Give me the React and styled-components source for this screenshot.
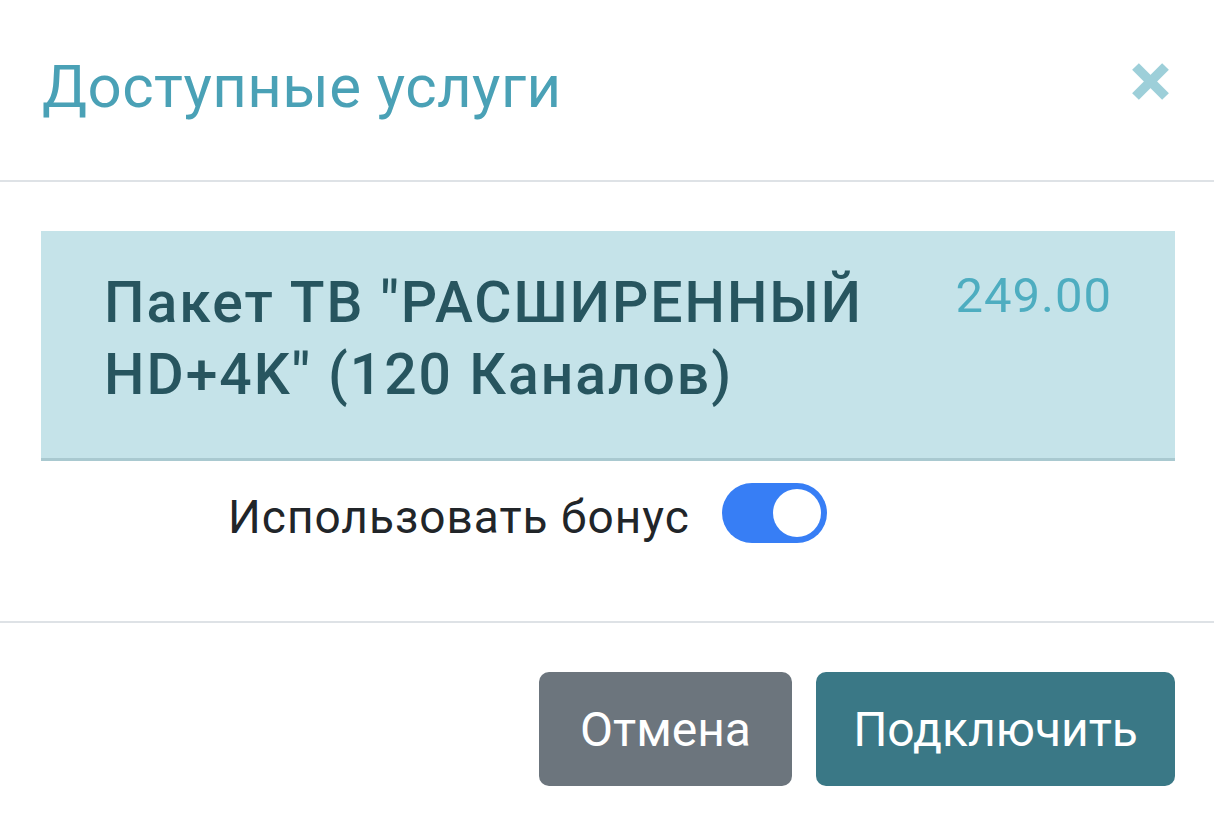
import React from "react";
import styled, { createGlobalStyle } from "styled-components";

const Global = createGlobalStyle`
  html, body { margin: 0; padding: 0; background: #ffffff; }
  body { font-family: Roboto, "Noto Sans", "Liberation Sans", sans-serif; }
  * { box-sizing: border-box; }
`;

const Modal = styled.div`
  width: 1214px;
  min-height: 831px;
  background: #ffffff;
  display: flex;
  flex-direction: column;
`;

const Header = styled.div`
  height: 182px;
  display: flex;
  justify-content: space-between;
  align-items: flex-start;
  padding: 51px 45px 0 42px;
  border-bottom: 2px solid #dee2e6;
`;

const Title = styled.h4`
  margin: 0;
  font-size: 60px;
  line-height: 72px;
  font-weight: 400;
  letter-spacing: 0.4px;
  color: #4aa1b6;
`;

const CloseButton = styled.button`
  margin-top: 12px;
  width: 37px;
  height: 37px;
  padding: 0;
  border: none;
  background: transparent;
  display: flex;
  cursor: pointer;
`;

const Body = styled.div`
  padding: 49px 39px 78px 41px;
`;

const ServiceCard = styled.div`
  height: 230px;
  background: #c5e3e9;
  border-bottom: 3px solid #a9c9d0;
  padding: 36px 63px 0 63px;
  display: flex;
  justify-content: space-between;
  align-items: flex-start;
  gap: 40px;
`;

const ServiceName = styled.div`
  max-width: 810px;
  font-size: 57px;
  line-height: 72px;
  font-weight: 500;
  letter-spacing: 2px;
  color: #27555f;
`;

const Price = styled.div`
  margin-top: 5px;
  font-size: 49px;
  line-height: 48px;
  letter-spacing: 1px;
  color: #4eadc0;
  white-space: nowrap;
`;

const BonusRow = styled.label`
  margin-top: 22px;
  height: 60px;
  padding-left: 187px;
  display: flex;
  align-items: flex-start;
  gap: 32px;
  cursor: pointer;
`;

const BonusText = styled.span`
  margin-top: 9px;
  font-size: 46px;
  line-height: 51px;
  letter-spacing: 1px;
  color: #212529;
`;

const Switch = styled.span`
  position: relative;
  width: 105px;
  height: 60px;
  border-radius: 30px;
  background: ${(p) => (p.$on ? "#377ef5" : "#dee2e6")};
  flex-shrink: 0;
`;

const Knob = styled.span`
  position: absolute;
  top: 6px;
  ${(p) => (p.$on ? "right: 6px;" : "left: 6px;")}
  width: 48px;
  height: 48px;
  border-radius: 50%;
  background: #ffffff;
`;

const Footer = styled.div`
  border-top: 2px solid #dee2e6;
  padding: 49px 39px 0 39px;
  display: flex;
  justify-content: flex-end;
  gap: 24px;
`;

const Button = styled.button`
  width: ${(p) => p.$width}px;
  height: 114px;
  padding: 2px 0 0;
  border: none;
  border-radius: 10px;
  font-family: Roboto, "Noto Sans", "Liberation Sans", sans-serif;
  font-size: 48px;
  line-height: 56px;
  color: #ffffff;
  text-align: center;
  background: ${(p) => (p.$variant === "primary" ? "#3a7886" : "#6c757d")};
  cursor: pointer;
`;

const CloseIcon = () => (
  <svg width="37" height="37" viewBox="0 0 37 37">
    <line x1="3.5" y1="3.5" x2="33.5" y2="33.5" stroke="#9dcfd9" strokeWidth="9.5" />
    <line x1="33.5" y1="3.5" x2="3.5" y2="33.5" stroke="#9dcfd9" strokeWidth="9.5" />
  </svg>
);

export default function App() {
  const [bonus, setBonus] = React.useState(true);
  return (
    <>
      <Global />
      <Modal>
        <Header>
          <Title>Доступные услуги</Title>
          <CloseButton aria-label="Закрыть">
            <CloseIcon />
          </CloseButton>
        </Header>
        <Body>
          <ServiceCard>
            <ServiceName>Пакет ТВ "РАСШИРЕННЫЙ HD+4K" (120 Каналов)</ServiceName>
            <Price>249.00</Price>
          </ServiceCard>
          <BonusRow onClick={() => setBonus(!bonus)}>
            <BonusText>Использовать бонус</BonusText>
            <Switch $on={bonus}>
              <Knob $on={bonus} />
            </Switch>
          </BonusRow>
        </Body>
        <Footer>
          <Button $variant="secondary" $width={253}>Отмена</Button>
          <Button $variant="primary" $width={359}>Подключить</Button>
        </Footer>
      </Modal>
    </>
  );
}
